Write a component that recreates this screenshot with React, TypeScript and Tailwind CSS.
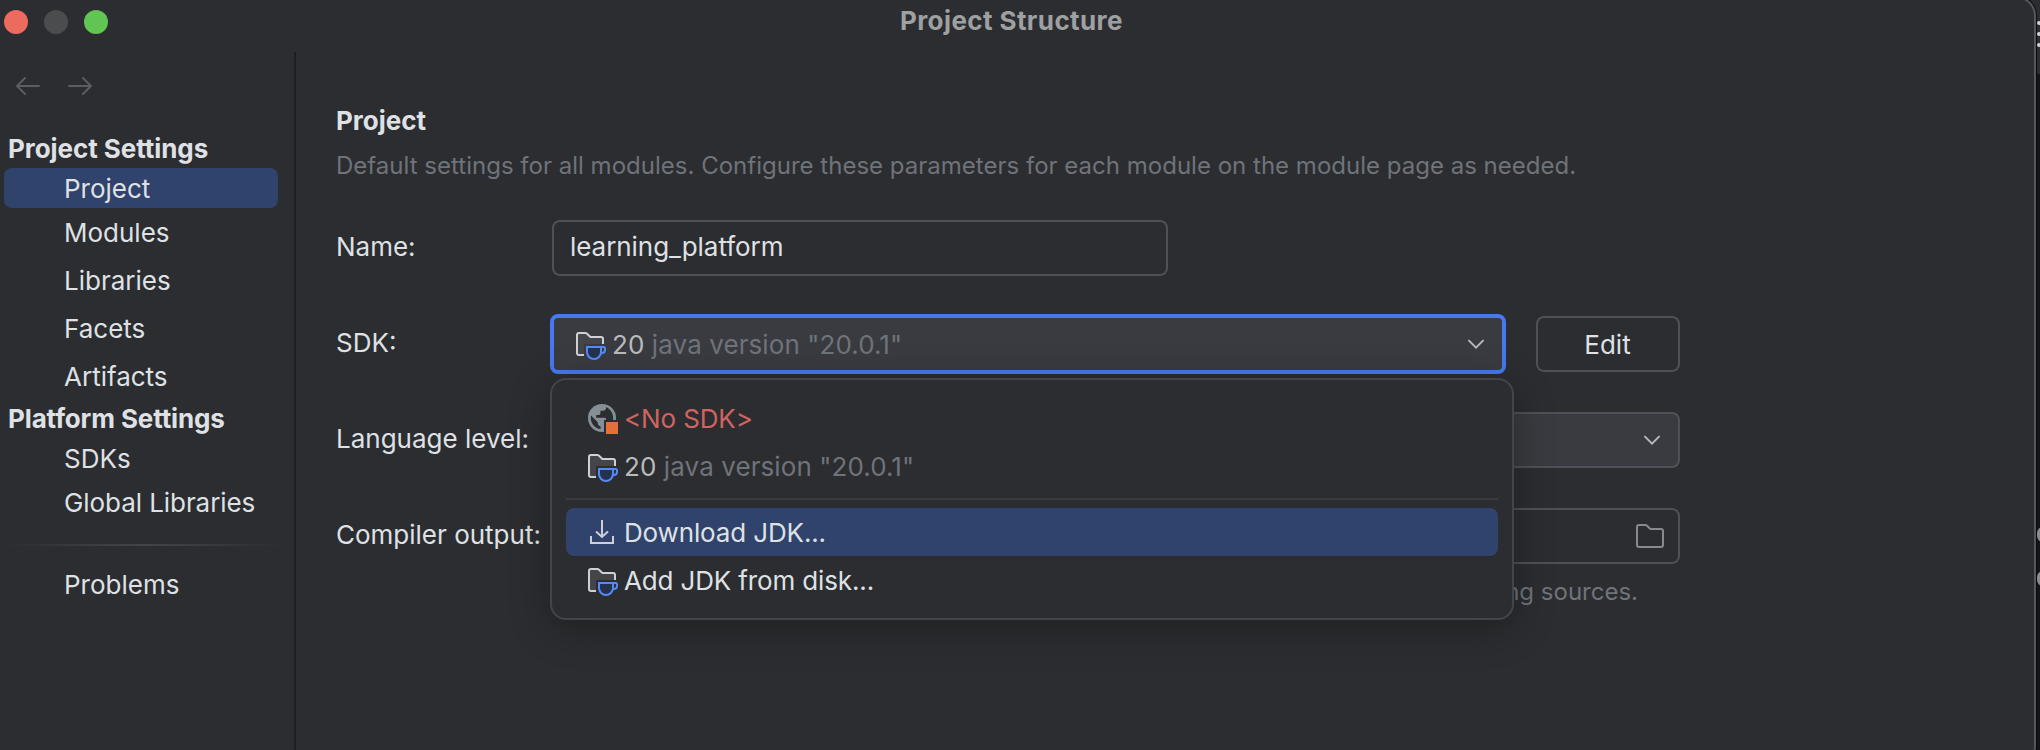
import type { ReactNode } from "react";

function JdkIcon({ badge }: { badge: string }) {
  return (
    <svg width="32" height="32" viewBox="0 0 16 16" fill="none" className="shrink-0">
      <path
        d="M1.5 11.5V3.5C1.5 2.9 1.9 2.5 2.5 2.5H5.7C6 2.5 6.2 2.6 6.4 2.8L8.2 4.5H13.5C14.1 4.5 14.5 4.9 14.5 5.5V8H6V13.5H3C2.1 13.5 1.5 13 1.5 12.3Z"
        fill="#43454a"
      />
      <path
        d="M14.5 8V5.5C14.5 4.9 14.1 4.5 13.5 4.5H8.2L6.4 2.8C6.2 2.6 6 2.5 5.7 2.5H2.5C1.9 2.5 1.5 2.9 1.5 3.5V12.5C1.5 13.1 1.9 13.5 2.5 13.5H5"
        stroke="#ced0d6"
      />
      <path d="M5 16V8H16V16Z" fill={badge} />
      <path d="M6.5 9.5H13.5V12C13.5 13.9 11.9 15.5 10 15.5C8.1 15.5 6.5 13.9 6.5 12Z" fill="#25324d" stroke="#548af7" />
      <path d="M13.5 9.5H14.8C15.2 9.5 15.5 9.8 15.5 10.3V11C15.5 11.9 14.8 12.5 14 12.5H13.4" stroke="#548af7" />
    </svg>
  );
}

function GlobeIcon() {
  return (
    <svg width="32" height="32" viewBox="0 0 32 32" fill="none" className="shrink-0">
      <circle cx="16" cy="16" r="14" fill="#868f96" />
      <path
        d="M20 4.9V6C20 7.6 18.8 8.8 17.2 8.8H14.4V11.6C14.4 12.4 13.8 13 13 13H10.2V15.8H18.6C19.4 15.8 20 16.4 20 17.2V21.4H21.4C22.7 21.4 23.7 22.2 24.1 23.3C26 21.3 27.2 18.8 27.2 16C27.2 11 24.2 6.7 20 4.9ZM5 13.5C4.9 14.3 4.8 15.1 4.8 16C4.8 21.7 9.1 26.5 14.6 27.1V24.4C13.1 24.4 11.8 23.1 11.8 21.6V20.2Z"
        fill="#2b2d30"
      />
      <rect x="18" y="18" width="14" height="14" fill="#2b2d30" />
      <rect x="20" y="20" width="12" height="12" fill="#e46f38" />
    </svg>
  );
}

function DownloadIcon() {
  return (
    <svg width="32" height="32" viewBox="0 0 32 32" fill="none" stroke="#ced0d6" strokeWidth="2" className="shrink-0">
      <path d="M16 4V21" />
      <path d="M10 15.5L16 21L22 15.5" />
      <path d="M5 20V27H27V20" />
    </svg>
  );
}

function FolderIcon() {
  return (
    <svg width="32" height="32" viewBox="0 0 16 16" fill="none" stroke="#868a91" className="shrink-0">
      <path d="M1.5 3.5C1.5 2.9 1.9 2.5 2.5 2.5H5.7C6 2.5 6.2 2.6 6.4 2.8L8.2 4.5H13.5C14.1 4.5 14.5 4.9 14.5 5.5V12.5C14.5 13.1 14.1 13.5 13.5 13.5H2.5C1.9 13.5 1.5 13.1 1.5 12.5Z" />
    </svg>
  );
}

function Chevron() {
  return (
    <svg width="32" height="32" viewBox="0 0 16 16" fill="none" stroke="#b4b8bf" strokeLinecap="round" className="shrink-0">
      <path d="M4.5 6.3L8 9.8L11.5 6.3" />
    </svg>
  );
}

function Arrow({ flip }: { flip?: boolean }) {
  return (
    <svg width="24" height="20" viewBox="0 0 24 20" fill="none" stroke="#5a5d63" strokeWidth="2" strokeLinecap="round" strokeLinejoin="round" className={flip ? "rotate-180" : ""}>
      <path d="M9 2L1 10L9 18M1 10H23" />
    </svg>
  );
}

function Item({ children, className = "h-12" }: { children: ReactNode; className?: string }) {
  return <div className={`flex items-center pl-[60px] ${className}`}>{children}</div>;
}

function JavaVersion() {
  return (
    <span className="whitespace-pre tracking-[0.09px] text-[#6f737a]">
      <span className="text-[#bbbbbb]">20</span> java version "20.0.1"
    </span>
  );
}

function Sidebar() {
  return (
    <aside className="flex w-[296px] shrink-0 flex-col border-r-2 border-[#1e1f22] pl-1">
      <div className="flex gap-7 pt-6 pl-3">
        <Arrow />
        <Arrow flip />
      </div>
      <div className="mt-8 flex h-10 items-center pl-1 font-[650] tracking-[-0.06px]">Project Settings</div>
      <Item className="h-10 w-[274px] rounded-lg bg-[#2f436c]">Project</Item>
      <Item>Modules</Item>
      <Item>Libraries</Item>
      <Item>Facets</Item>
      <Item>Artifacts</Item>
      <div className="flex h-9 items-center pl-1 font-[650] tracking-[-0.13px]">Platform Settings</div>
      <Item className="mt-[3px] h-[39px]">SDKs</Item>
      <Item className="h-12 tracking-[-0.07px]">Global Libraries</Item>
      <div className="mt-[18px] h-0.5 w-[280px] bg-linear-to-r from-transparent via-[#43454a] to-transparent" />
      <Item className="mt-[14px] h-12">Problems</Item>
    </aside>
  );
}

function Popup() {
  return (
    <div className="absolute top-[64px] left-0 z-10 flex h-[242px] w-[964px] flex-col rounded-2xl border-2 border-[#43454a] bg-[#2b2d30] p-[14px] tracking-[-0.14px] shadow-[0_8px_40px_rgba(0,0,0,0.3)]">
      <div className="flex h-12 items-center gap-1.5 pl-5 text-[#cf6460]">
        <GlobeIcon />
        &lt;No SDK&gt;
      </div>
      <div className="flex h-12 items-center gap-1.5 pl-5">
        <JdkIcon badge="#2b2d30" />
        <JavaVersion />
      </div>
      <div className="my-2 h-0.5 shrink-0 bg-[#393b40]" />
      <div className="flex h-12 items-center gap-1.5 rounded-lg bg-[#2f436c] pl-5">
        <DownloadIcon />
        Download JDK...
      </div>
      <div className="flex h-12 items-center gap-1.5 pl-5">
        <JdkIcon badge="#2b2d30" />
        Add JDK from disk...
      </div>
    </div>
  );
}

function Main() {
  return (
    <main className="flex w-[1740px] flex-col pl-10">
      <h1 className="mt-[49px] h-10 leading-10 font-[650]">Project</h1>
      <p className="mt-[7px] h-9 text-2xl leading-9 tracking-[0.01px] whitespace-nowrap text-[#6f737a]">
        Default settings for all modules. Configure these parameters for each module on the module page as needed.
      </p>
      <div className="mt-9 flex h-14">
        <label className="w-[216px] leading-[54px]">Name:</label>
        <div className="h-14 w-[616px] rounded-lg border-2 border-[#4e5157] pl-4 leading-[50px] tracking-[-0.05px]">learning_platform</div>
      </div>
      <div className="mt-[38px] flex h-[60px]">
        <label className="w-[214px] leading-[58px]">SDK:</label>
        <div className="relative h-[60px] w-[956px]">
          <div className="flex h-[60px] items-center justify-between rounded-lg border-4 border-[#4678ee] bg-[#393b40] pr-[10px] pl-5">
            <div className="flex items-center gap-1.5">
              <JdkIcon badge="#393b40" />
              <JavaVersion />
            </div>
            <Chevron />
          </div>
          <Popup />
        </div>
        <button className="mt-0.5 ml-[30px] h-14 w-36 rounded-lg border-2 border-[#4e5157] pr-px">Edit</button>
      </div>
      <div className="mt-[38px] flex h-14">
        <label className="w-[216px] leading-[54px]">Language level:</label>
        <div className="flex h-14 w-[1128px] items-center justify-end rounded-lg border-2 border-[#4e5157] bg-[#393b40] pr-[10px]">
          <Chevron />
        </div>
      </div>
      <div className="mt-10 flex h-14">
        <label className="w-[216px] leading-[54px] whitespace-nowrap">Compiler output:</label>
        <div className="flex h-14 w-[1128px] items-center justify-end rounded-lg border-2 border-[#4e5157] pr-3">
          <FolderIcon />
        </div>
      </div>
      <p className="mt-[10px] w-[1302px] text-right text-2xl leading-9 text-[#6f737a]">
        sources and test sources, generating sources.
      </p>
    </main>
  );
}

export default function App() {
  return (
    <div className="relative h-[750px] w-[2040px] overflow-hidden bg-[#131417] font-['Inter','Liberation_Sans',sans-serif] text-[26px] text-[#dfe1e5]">
      <div className="absolute top-0 right-0 flex h-[74px] w-[10px] flex-col gap-[7px] overflow-hidden bg-[#2b2d30] pt-[21px] pl-[7px]">
        <span className="size-1 shrink-0 rounded-full bg-[#ced0d6]" />
        <span className="size-1 shrink-0 rounded-full bg-[#ced0d6]" />
        <span className="size-1 shrink-0 rounded-full bg-[#ced0d6]" />
      </div>
      <div className="absolute top-[527px] left-[2037px] h-[15px] w-3 rounded-full border-[3px] border-[#8a8b8e]" />
      <div className="absolute top-[571px] left-[2037px] h-[15px] w-3 rounded-full border-[3px] border-[#8a8b8e]" />
      <div className="relative -mt-1 -ml-5 flex h-[770px] w-[2056px] flex-col rounded-[20px] border-2 border-[#55575a] bg-[#2b2d30] pt-[2px] pl-[18px] shadow-[0_0_0_1px_#0a0a0b]">
        <header className="relative flex h-[52px] shrink-0 items-center">
          <div className="flex gap-4 pb-2 pl-1">
            <span className="size-6 rounded-full bg-[#ed6a5e]" />
            <span className="size-6 rounded-full bg-[#4b4c4e]" />
            <span className="size-6 rounded-full bg-[#61c554]" />
          </div>
          <div className="ml-[792px] pb-3 font-bold tracking-[0.4px] text-[#9fa0a2]">Project Structure</div>
        </header>
        <div className="flex min-h-0 flex-1">
          <Sidebar />
          <Main />
        </div>
      </div>
    </div>
  );
}
